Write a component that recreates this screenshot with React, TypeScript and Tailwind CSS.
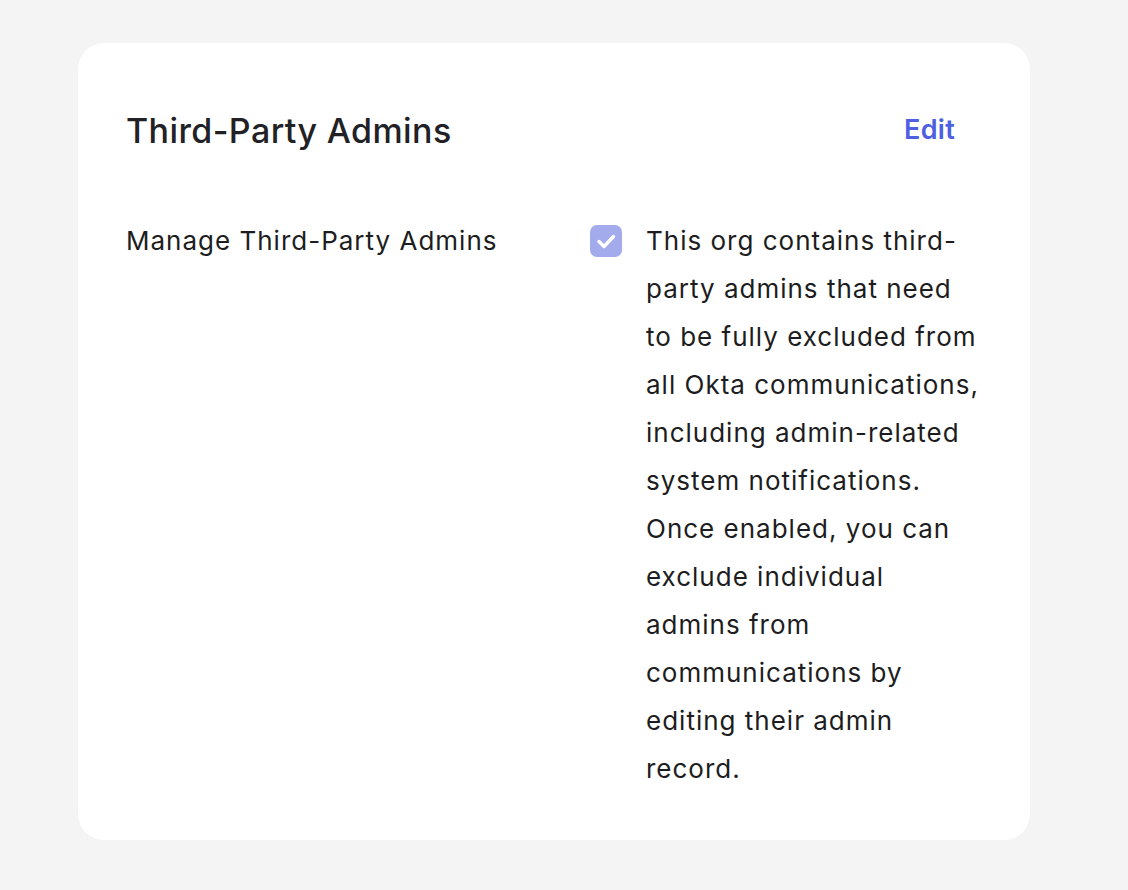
function CheckedBox() {
  return (
    <span className="flex h-[32px] w-[32px] shrink-0 items-center justify-center rounded-[7px] bg-[#a4abec]">
      <svg width="32" height="32" viewBox="0 0 32 32" fill="none">
        <path d="M9 16.5l5 5 9.5-10" stroke="white" strokeWidth="3.4" strokeLinecap="round" strokeLinejoin="round" />
      </svg>
    </span>
  )
}

export default function App() {
  return (
    <div className="min-h-[890px] bg-[#f4f4f4] pt-[43px] pl-[78px] font-['Inter',sans-serif] text-[#1d1d21]">
      <div className="w-[952px] rounded-[26px] bg-white px-[48px] pt-[48px] pb-[47px]">
        <div className="flex h-[78px] items-center justify-between">
          <h2 className="text-[34px] font-medium tracking-[0.4px] text-[#222226]">Third-Party Admins</h2>
          <button className="mr-[27px] text-[27px] font-semibold tracking-[0.3px] text-[#4e5fe1]">Edit</button>
        </div>
        <div className="mt-[48px] flex">
          <div className="w-[464px] shrink-0 text-[26px] leading-[48px] tracking-[1px]">Manage Third-Party Admins</div>
          <div className="flex gap-[24px]">
            <div className="shrink-0 pt-[8px]">
              <CheckedBox />
            </div>
            <p className="w-[336px] text-[26px] leading-[48px] tracking-[1px]">
              This org contains third-party admins that need to be fully excluded from all Okta communications,
              including admin-related system notifications. Once enabled, you can exclude individual admins from
              communications by editing their admin record.
            </p>
          </div>
        </div>
      </div>
    </div>
  )
}
